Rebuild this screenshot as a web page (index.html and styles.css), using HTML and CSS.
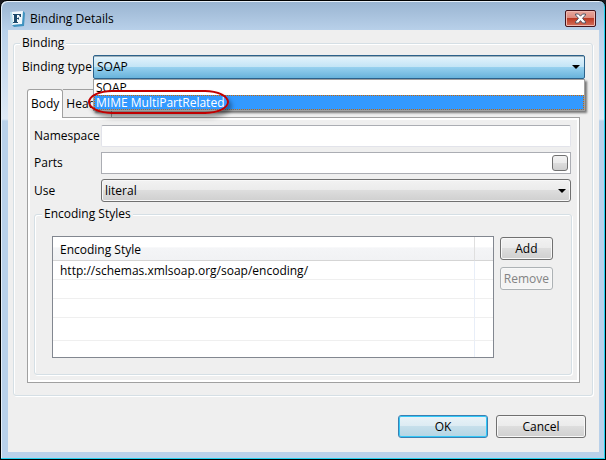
FILE: index.html
```html
<!DOCTYPE html>
<html lang="en">
<head>
    <meta charset="UTF-8">
    <meta name="viewport" content="width=device-width, initial-scale=1.0">
    <title>Binding Details</title>
    <link rel="stylesheet" href="styles.css">
</head>
<body>
    <div class="window">
        <!-- title bar -->
        <header class="title-bar">
            <svg class="app-icon" width="16" height="16" viewBox="0 0 16 16" aria-hidden="true">
                <path d="M1 1 L13 0 L13 13 L2 14 Z" fill="#f1f8fc"/>
                <path d="M0 1 L2 1 L3 13 L1 13 Z" fill="#b5dcec"/>
                <path d="M13 0 L15 2 L14 15 L4 16 L2 14 L12 13 Z" fill="#3f93c0"/>
                <path d="M3 3 H11 V6 H10 L9 4 H7 V7 H8 L9 6 V9 L8 8 H7 V11 H8 V12 H3 V11 H4 V4 H3 Z" fill="#1d4a6b"/>
            </svg>
            <h1 class="title">Binding Details</h1>
            <button class="close-button" type="button" aria-label="Close">
                <svg width="13" height="11" viewBox="0 0 13 11">
                    <path d="M1.5 1 H4.5 L6.5 3.2 L8.5 1 H11.5 V2 L8.5 5.3 L11.5 8.8 V10 H8.5 L6.5 7.6 L4.5 10 H1.5 V8.8 L4.5 5.3 L1.5 2 Z" fill="#fff" stroke="#535666"/>
                </svg>
            </button>
        </header>

        <form class="content">
            <fieldset class="group">
                <legend>Binding</legend>

                <div class="binding-row">
                    <label for="bindingType">Binding type</label>
                    <div class="combo combo-open">
                        <select id="bindingType">
                            <option selected>SOAP</option>
                            <option>MIME MultiPartRelated</option>
                        </select>
                        <!-- open list -->
                        <ul class="combo-list" role="listbox" aria-label="Binding type">
                            <li role="option">SOAP</li>
                            <li class="highlighted" role="option" aria-selected="true">MIME MultiPartRelated</li>
                        </ul>
                        <span class="callout"></span>
                    </div>
                </div>

                <!-- tabs -->
                <div class="tabs" role="tablist">
                    <button class="tab active" type="button" role="tab" aria-selected="true">Body</button>
                    <button class="tab" type="button" role="tab">Header</button>
                </div>

                <div class="tab-panel" role="tabpanel">
                    <div class="fields">
                        <label for="namespace">Namespace</label>
                        <input id="namespace" class="text-box soft" type="text">

                        <label for="parts">Parts</label>
                        <div class="picker">
                            <input id="parts" class="text-box" type="text">
                            <button class="picker-button" type="button" aria-label="Choose parts"></button>
                        </div>

                        <label for="use">Use</label>
                        <div class="combo">
                            <select id="use">
                                <option selected>literal</option>
                                <option>encoded</option>
                            </select>
                        </div>
                    </div>

                    <fieldset class="group styles-group">
                        <legend>Encoding Styles</legend>
                        <div class="styles-row">
                            <table class="styles-table">
                                <thead>
                                    <tr><th>Encoding Style</th><th class="filler"></th></tr>
                                </thead>
                                <tbody>
                                    <tr><td>http://schemas.xmlsoap.org/soap/encoding/</td><td></td></tr>
                                    <tr><td></td><td></td></tr>
                                    <tr><td></td><td></td></tr>
                                    <tr class="tall"><td></td><td></td></tr>
                                    <tr><td></td><td></td></tr>
                                </tbody>
                            </table>
                            <div class="side-buttons">
                                <button class="button" type="button">Add</button>
                                <button class="button" type="button" disabled>Remove</button>
                            </div>
                        </div>
                    </fieldset>
                </div>
            </fieldset>

            <!-- dialog buttons -->
            <footer class="actions">
                <button class="button default" type="submit">OK</button>
                <button class="button" type="button">Cancel</button>
            </footer>
        </form>
    </div>
</body>
</html>
```

FILE: styles.css
```css
* {
    box-sizing: border-box;
}

body {
    margin: 0;
    background-color: #1a1a1f;
    font-family: "Open Sans", "Noto Sans", sans-serif;
    font-size: 12px;
    line-height: 16px;
    color: #000;
}

button,
input,
select {
    font: inherit;
    color: inherit;
    margin: 0;
}

/* window frame */
.window {
    display: flex;
    flex-direction: column;
    min-height: 100vh;
    padding: 1px 6px 7px 7px;
    border: 1px solid #000;
    border-radius: 7px 7px 0 0;
    background: linear-gradient(#99b4d1, #b9d1ea 30px, #dfeaf6 118px, #b9d1ea 120px);
    box-shadow: inset -1px -1px 0 #22d0ee, inset 1px 1px 0 #e6eff8;
}

.title-bar {
    display: flex;
    align-items: center;
    height: 28px;
    padding: 5px 3px 0 2px;
}

.title {
    flex: 1;
    margin: 0 0 0 4px;
    font-size: 12px;
    font-weight: normal;
}

.close-button {
    display: flex;
    align-items: center;
    justify-content: center;
    width: 31px;
    height: 17px;
    padding: 0;
    border: 1px solid #43141c;
    border-radius: 2px;
    background: linear-gradient(#e8a79c, #dc8a7e 48%, #bc3a24 50%, #d4705c);
    box-shadow: inset 0 0 0 1px #efb9b1;
}

.content {
    display: flex;
    flex: 1;
    flex-direction: column;
    justify-content: space-between;
    padding: 5px 6px 14px 5px;
    background-color: #efefef;
}

/* etched group boxes */
.group {
    min-width: 0;
    margin: 0;
    padding: 4px 7px 12px;
    border: 1px solid #d5dfe5;
    border-radius: 3px;
    box-shadow: 1px 1px 0 #fff, inset 1px 1px 0 #fff;
}

.group legend {
    margin-left: -1px;
    padding: 0 2px;
    background-color: #efefef;
}

.binding-row {
    display: grid;
    grid-template-columns: 71px 1fr;
    align-items: center;
    padding-left: 1px;
    white-space: nowrap;
}

/* drop-downs */
.combo {
    position: relative;
}

.combo select {
    display: block;
    width: 100%;
    height: 23px;
    padding: 0 3px;
    border: 1px solid #707070;
    border-radius: 3px;
    appearance: none;
    background: linear-gradient(#f2f2f2, #ebebeb 48%, #dddddd 50%, #cfcfcf);
    box-shadow: inset 0 0 0 1px #f8f8f8;
}

.combo::after {
    content: "";
    position: absolute;
    top: 10px;
    right: 5px;
    border: 4px solid transparent;
    border-top-color: #000;
    border-bottom: 0;
}

.combo-open select {
    height: 24px;
    border-color: #2c628b;
    border-radius: 2px;
    background: linear-gradient(#e5f4fc, #c4e5f6 48%, #98d1ef 50%, #68b3db);
    box-shadow: inset 0 1px 0 #9eb0ba;
}

.combo-list {
    position: absolute;
    z-index: 1;
    top: 100%;
    left: 0;
    right: 0;
    margin: 0;
    padding: 0;
    border: 1px solid #a0a0a0;
    background-color: #fff;
    box-shadow: 2px 2px 2px rgba(0, 0, 0, 0.5);
    list-style: none;
}

.combo-list li {
    height: 15px;
    padding: 0 2px;
    line-height: 15px;
}

.combo-list .highlighted {
    background-color: #3399ff;
    color: #fff;
    outline: 1px dotted #cc6600;
    outline-offset: -1px;
}

/* red ring round the highlighted item */
.callout {
    position: absolute;
    z-index: 2;
    top: 35px;
    left: -5px;
    width: 141px;
    height: 24px;
    border: 2px solid #c00000;
    border-radius: 24px / 12px;
    box-shadow: 3px 4px 4px rgba(0, 0, 0, 0.35);
}

/* tabs */
.tabs {
    display: flex;
    align-items: flex-end;
    margin: 10px 6px 0;
}

.tab {
    height: 28px;
    padding: 0 3px;
    border: 1px solid #a0a0a0;
    border-left: 0;
    border-bottom: 0;
    border-radius: 0 3px 0 0;
    background-color: #efefef;
}

.tab.active {
    position: relative;
    height: 29px;
    margin-bottom: -1px;
    padding: 0 3px 1px;
    border-left: 1px solid #a0a0a0;
    border-radius: 3px 3px 0 0;
    background-color: #fff;
}

.tab-panel {
    margin: 0 5px 0 6px;
    padding: 4px 5px 7px;
    border: 1px solid #a0a0a0;
    box-shadow: inset 0 0 0 2px #fff;
}

.fields {
    display: grid;
    grid-template-columns: 67px 1fr;
    align-items: center;
    row-gap: 5px;
    padding: 3px 3px 0 1px;
}

.text-box {
    display: block;
    width: 100%;
    height: 22px;
    padding: 0 4px;
    border: 1px solid #abadb3;
    background-color: #fff;
}

.text-box.soft {
    border-color: #abadb3 #e2e3ea #e2e3ea;
    border-radius: 2px;
}

.picker {
    position: relative;
}

.picker-button {
    position: absolute;
    top: 3px;
    right: 3px;
    width: 16px;
    height: 16px;
    padding: 0;
    border: 1px solid #707070;
    border-radius: 3px;
    background: linear-gradient(#f2f2f2, #ebebeb 48%, #dddddd 50%, #cfcfcf);
}

/* encoding styles */
.styles-group {
    margin: 4px 2px 0 1px;
    padding: 14px 18px 16px 17px;
}

.styles-group legend {
    margin-left: -10px;
}

.styles-row {
    display: flex;
    gap: 6px;
}

.styles-table {
    flex: 1;
    border: 1px solid #828790;
    border-collapse: separate;
    border-spacing: 0;
    background-color: #fff;
}

.styles-table th {
    height: 24px;
    padding: 3px 7px 0;
    border-right: 1px solid #dfdfdf;
    border-bottom: 1px solid #d5d5d5;
    background: linear-gradient(#fff 45%, #f4f5f7 46%, #f1f2f4);
    font-weight: normal;
    text-align: left;
}

.styles-table .filler {
    width: 18px;
}

.styles-table td {
    height: 19px;
    padding: 2px 7px 0;
    border-right: 1px solid #e8eef8;
    border-bottom: 1px solid #efefef;
}

.styles-table .tall td {
    height: 23px;
}

.styles-table th:last-child,
.styles-table td:last-child {
    padding: 0;
    border-right: 0;
}

.styles-table tbody tr:last-child td {
    height: 16px;
    border-bottom: 0;
}

.side-buttons {
    display: flex;
    flex-direction: column;
    gap: 7px;
    padding-top: 1px;
}

.button {
    min-width: 53px;
    height: 23px;
    padding: 0 3px;
    border: 1px solid #707070;
    border-radius: 3px;
    background: linear-gradient(#f2f2f2, #ebebeb 48%, #dddddd 50%, #cfcfcf);
    box-shadow: inset 0 0 0 1px #f8f8f8;
}

.button:disabled {
    border-color: #adb2b5;
    background: #f4f4f4;
    color: #838383;
}

.actions {
    display: flex;
    justify-content: flex-end;
    gap: 8px;
    padding-right: 7px;
}

.actions .button {
    width: 90px;
}

.button.default {
    border-color: #3c7fb1;
    background: linear-gradient(#eaf3f8, #dcebf3 48%, #c6dfeb 50%, #b4d5e4);
    box-shadow: inset 0 0 0 1px #32c8f8;
}
```
